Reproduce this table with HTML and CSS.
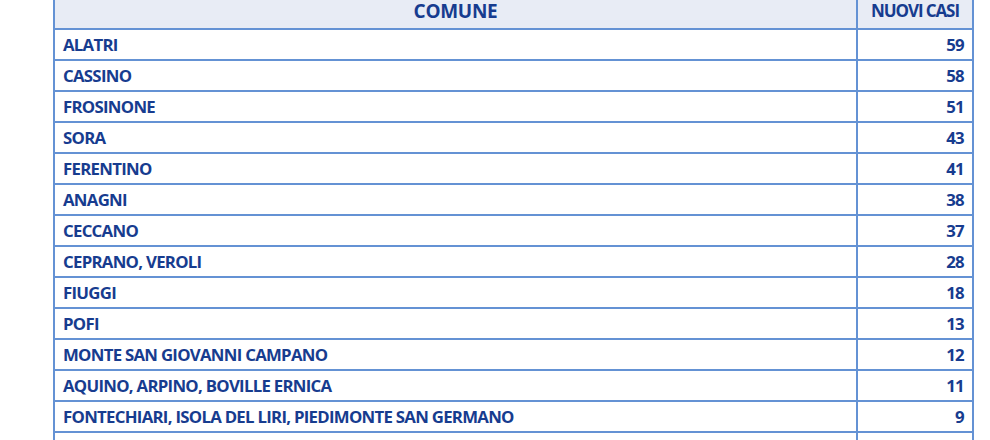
FILE: index.html
```html
<!DOCTYPE html>
<html lang="it">
<head>
<meta charset="utf-8">
<title>Nuovi casi per comune</title>
<link rel="stylesheet" href="styles.css">
</head>
<body>
<div class="wrap">
<table class="casi">
<thead>
<tr><th class="c-name h-comune">COMUNE</th><th class="c-num h-casi">NUOVI CASI</th></tr>
</thead>
<tbody>
<tr><td class="c-name">ALATRI</td><td class="c-num">59</td></tr>
<tr><td class="c-name">CASSINO</td><td class="c-num">58</td></tr>
<tr><td class="c-name">FROSINONE</td><td class="c-num">51</td></tr>
<tr><td class="c-name">SORA</td><td class="c-num">43</td></tr>
<tr><td class="c-name">FERENTINO</td><td class="c-num">41</td></tr>
<tr><td class="c-name">ANAGNI</td><td class="c-num">38</td></tr>
<tr><td class="c-name">CECCANO</td><td class="c-num">37</td></tr>
<tr><td class="c-name">CEPRANO, VEROLI</td><td class="c-num">28</td></tr>
<tr><td class="c-name">FIUGGI</td><td class="c-num">18</td></tr>
<tr><td class="c-name">POFI</td><td class="c-num">13</td></tr>
<tr><td class="c-name">MONTE SAN GIOVANNI CAMPANO</td><td class="c-num">12</td></tr>
<tr><td class="c-name">AQUINO, ARPINO, BOVILLE ERNICA</td><td class="c-num">11</td></tr>
<tr><td class="c-name">FONTECHIARI, ISOLA DEL LIRI, PIEDIMONTE SAN GERMANO</td><td class="c-num">9</td></tr>
<tr><td class="c-name">SANT'ELIA FIUMERAPIDO</td><td class="c-num">8</td></tr>
</tbody>
</table>
</div>
</body>
</html>
```
FILE: styles.css
```css
html, body {
  margin: 0;
  padding: 0;
  background: #ffffff;
  overflow: hidden;
}
.wrap {
  padding-left: 53px;
  height: 440px;
  overflow: hidden;
}
.casi {
  border-collapse: collapse;
  width: 921px;
  font-family: "Open Sans", sans-serif;
  font-weight: 700;
  font-size: 16.8px;
  letter-spacing: -0.72px;
  color: #173c8f;
}
.casi th, .casi td {
  border: 2px solid #6492d4;
  height: 29px;
  padding: 0 8px;
  line-height: 29px;
  box-sizing: border-box;
}
.casi thead th {
  background: #e8ecf5;
  height: 29px;
  text-align: center;
  vertical-align: top;
  line-height: 20px;
  padding-top: 1px;
  border-top: none;
}
.h-comune {
  font-size: 19px;
  letter-spacing: -0.3px;
}
.h-casi {
  font-size: 17px;
  letter-spacing: -1.1px;
}
.c-name {
  width: 803px;
  text-align: left;
}
.c-num {
  text-align: right;
}
```
